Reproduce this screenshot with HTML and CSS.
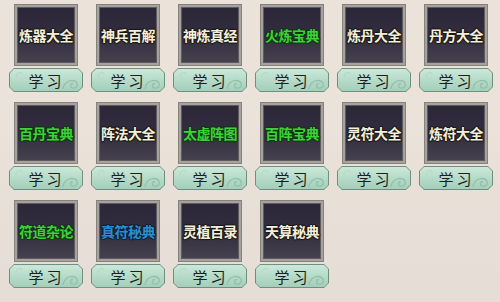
FILE: index.html
```html
<!DOCTYPE html>
<html lang="zh">
<head>
<meta charset="utf-8">
<link rel="stylesheet" href="styles.css">
</head>
<body>
<div class="grid">
  <div class="item"><div class="card"><span class="title white">炼器大全</span></div><div class="btn"><div class="btn-in"><svg class="swirl" viewBox="0 0 12 10"><path d="M1 9 Q1 2 7 2 Q10 2 10 5" fill="none"/></svg><span>学习</span><svg class="cloud" viewBox="0 0 20 16"><path d="M1 15 Q3 6 11 5 Q18 5 18 10 Q18 14 13 14 Q10 14 10 11 Q10 8 13 9" fill="none"/></svg></div></div></div>
  <div class="item"><div class="card"><span class="title white">神兵百解</span></div><div class="btn"><div class="btn-in"><svg class="swirl" viewBox="0 0 12 10"><path d="M1 9 Q1 2 7 2 Q10 2 10 5" fill="none"/></svg><span>学习</span><svg class="cloud" viewBox="0 0 20 16"><path d="M1 15 Q3 6 11 5 Q18 5 18 10 Q18 14 13 14 Q10 14 10 11 Q10 8 13 9" fill="none"/></svg></div></div></div>
  <div class="item"><div class="card"><span class="title white">神炼真经</span></div><div class="btn"><div class="btn-in"><svg class="swirl" viewBox="0 0 12 10"><path d="M1 9 Q1 2 7 2 Q10 2 10 5" fill="none"/></svg><span>学习</span><svg class="cloud" viewBox="0 0 20 16"><path d="M1 15 Q3 6 11 5 Q18 5 18 10 Q18 14 13 14 Q10 14 10 11 Q10 8 13 9" fill="none"/></svg></div></div></div>
  <div class="item"><div class="card"><span class="title green">火炼宝典</span></div><div class="btn"><div class="btn-in"><svg class="swirl" viewBox="0 0 12 10"><path d="M1 9 Q1 2 7 2 Q10 2 10 5" fill="none"/></svg><span>学习</span><svg class="cloud" viewBox="0 0 20 16"><path d="M1 15 Q3 6 11 5 Q18 5 18 10 Q18 14 13 14 Q10 14 10 11 Q10 8 13 9" fill="none"/></svg></div></div></div>
  <div class="item"><div class="card"><span class="title white">炼丹大全</span></div><div class="btn"><div class="btn-in"><svg class="swirl" viewBox="0 0 12 10"><path d="M1 9 Q1 2 7 2 Q10 2 10 5" fill="none"/></svg><span>学习</span><svg class="cloud" viewBox="0 0 20 16"><path d="M1 15 Q3 6 11 5 Q18 5 18 10 Q18 14 13 14 Q10 14 10 11 Q10 8 13 9" fill="none"/></svg></div></div></div>
  <div class="item"><div class="card"><span class="title white">丹方大全</span></div><div class="btn"><div class="btn-in"><svg class="swirl" viewBox="0 0 12 10"><path d="M1 9 Q1 2 7 2 Q10 2 10 5" fill="none"/></svg><span>学习</span><svg class="cloud" viewBox="0 0 20 16"><path d="M1 15 Q3 6 11 5 Q18 5 18 10 Q18 14 13 14 Q10 14 10 11 Q10 8 13 9" fill="none"/></svg></div></div></div>

  <div class="item"><div class="card"><span class="title green">百丹宝典</span></div><div class="btn"><div class="btn-in"><svg class="swirl" viewBox="0 0 12 10"><path d="M1 9 Q1 2 7 2 Q10 2 10 5" fill="none"/></svg><span>学习</span><svg class="cloud" viewBox="0 0 20 16"><path d="M1 15 Q3 6 11 5 Q18 5 18 10 Q18 14 13 14 Q10 14 10 11 Q10 8 13 9" fill="none"/></svg></div></div></div>
  <div class="item"><div class="card"><span class="title white">阵法大全</span></div><div class="btn"><div class="btn-in"><svg class="swirl" viewBox="0 0 12 10"><path d="M1 9 Q1 2 7 2 Q10 2 10 5" fill="none"/></svg><span>学习</span><svg class="cloud" viewBox="0 0 20 16"><path d="M1 15 Q3 6 11 5 Q18 5 18 10 Q18 14 13 14 Q10 14 10 11 Q10 8 13 9" fill="none"/></svg></div></div></div>
  <div class="item"><div class="card"><span class="title green">太虚阵图</span></div><div class="btn"><div class="btn-in"><svg class="swirl" viewBox="0 0 12 10"><path d="M1 9 Q1 2 7 2 Q10 2 10 5" fill="none"/></svg><span>学习</span><svg class="cloud" viewBox="0 0 20 16"><path d="M1 15 Q3 6 11 5 Q18 5 18 10 Q18 14 13 14 Q10 14 10 11 Q10 8 13 9" fill="none"/></svg></div></div></div>
  <div class="item"><div class="card"><span class="title green">百阵宝典</span></div><div class="btn"><div class="btn-in"><svg class="swirl" viewBox="0 0 12 10"><path d="M1 9 Q1 2 7 2 Q10 2 10 5" fill="none"/></svg><span>学习</span><svg class="cloud" viewBox="0 0 20 16"><path d="M1 15 Q3 6 11 5 Q18 5 18 10 Q18 14 13 14 Q10 14 10 11 Q10 8 13 9" fill="none"/></svg></div></div></div>
  <div class="item"><div class="card"><span class="title white">灵符大全</span></div><div class="btn"><div class="btn-in"><svg class="swirl" viewBox="0 0 12 10"><path d="M1 9 Q1 2 7 2 Q10 2 10 5" fill="none"/></svg><span>学习</span><svg class="cloud" viewBox="0 0 20 16"><path d="M1 15 Q3 6 11 5 Q18 5 18 10 Q18 14 13 14 Q10 14 10 11 Q10 8 13 9" fill="none"/></svg></div></div></div>
  <div class="item"><div class="card"><span class="title white">炼符大全</span></div><div class="btn"><div class="btn-in"><svg class="swirl" viewBox="0 0 12 10"><path d="M1 9 Q1 2 7 2 Q10 2 10 5" fill="none"/></svg><span>学习</span><svg class="cloud" viewBox="0 0 20 16"><path d="M1 15 Q3 6 11 5 Q18 5 18 10 Q18 14 13 14 Q10 14 10 11 Q10 8 13 9" fill="none"/></svg></div></div></div>

  <div class="item"><div class="card"><span class="title green">符道杂论</span></div><div class="btn"><div class="btn-in"><svg class="swirl" viewBox="0 0 12 10"><path d="M1 9 Q1 2 7 2 Q10 2 10 5" fill="none"/></svg><span>学习</span><svg class="cloud" viewBox="0 0 20 16"><path d="M1 15 Q3 6 11 5 Q18 5 18 10 Q18 14 13 14 Q10 14 10 11 Q10 8 13 9" fill="none"/></svg></div></div></div>
  <div class="item"><div class="card"><span class="title blue">真符秘典</span></div><div class="btn"><div class="btn-in"><svg class="swirl" viewBox="0 0 12 10"><path d="M1 9 Q1 2 7 2 Q10 2 10 5" fill="none"/></svg><span>学习</span><svg class="cloud" viewBox="0 0 20 16"><path d="M1 15 Q3 6 11 5 Q18 5 18 10 Q18 14 13 14 Q10 14 10 11 Q10 8 13 9" fill="none"/></svg></div></div></div>
  <div class="item"><div class="card"><span class="title white">灵植百录</span></div><div class="btn"><div class="btn-in"><svg class="swirl" viewBox="0 0 12 10"><path d="M1 9 Q1 2 7 2 Q10 2 10 5" fill="none"/></svg><span>学习</span><svg class="cloud" viewBox="0 0 20 16"><path d="M1 15 Q3 6 11 5 Q18 5 18 10 Q18 14 13 14 Q10 14 10 11 Q10 8 13 9" fill="none"/></svg></div></div></div>
  <div class="item"><div class="card"><span class="title white">天算秘典</span></div><div class="btn"><div class="btn-in"><svg class="swirl" viewBox="0 0 12 10"><path d="M1 9 Q1 2 7 2 Q10 2 10 5" fill="none"/></svg><span>学习</span><svg class="cloud" viewBox="0 0 20 16"><path d="M1 15 Q3 6 11 5 Q18 5 18 10 Q18 14 13 14 Q10 14 10 11 Q10 8 13 9" fill="none"/></svg></div></div></div>
</div>
</body>
</html>
```

FILE: styles.css
```css
html, body {
  margin: 0;
  padding: 0;
}
body {
  width: 500px;
  height: 302px;
  overflow: hidden;
  background: linear-gradient(180deg, #ebe2da 0%, #ebe2d9 40%, #e8dfd7 60%, #e6ded6 100%);
  font-family: "Noto Sans CJK SC", "Noto Sans", sans-serif;
}
.grid {
  display: grid;
  grid-template-columns: repeat(6, 74px);
  column-gap: 8px;
  row-gap: 10px;
  padding: 4px 0 0 9px;
}
.item {
  display: flex;
  flex-direction: column;
  align-items: center;
  gap: 2px;
}
.card {
  width: 64px;
  height: 62px;
  box-sizing: border-box;
  border: 1px solid #85817c;
  box-shadow: inset 0 0 0 2px #a6a29d, inset 0 0 0 3px #5e5a60;
  background: linear-gradient(180deg, #2b2737 0%, #322d3f 50%, #48434f 100%);
  display: flex;
  align-items: center;
  justify-content: center;
}
.title {
  font-size: 14px;
  font-weight: 700;
  letter-spacing: -0.5px;
  line-height: 1;
}
.white {
  color: #f3efdc;
  text-shadow: 0 0 1px #1a1812, 1px 0 1px #1a1812, -1px 0 1px #1a1812, 0 1px 1px #1a1812, 0 -1px 1px #1a1812;
}
.green {
  color: #3fd03c;
  text-shadow: 0 0 1px #0f3a0e, 1px 0 1px #0f3a0e, -1px 0 1px #0f3a0e, 0 1px 1px #0f3a0e, 0 -1px 1px #0f3a0e;
}
.blue {
  color: #2a8fd0;
  text-shadow: 0 0 1px #0c2032, 1px 0 1px #0c2032, -1px 0 1px #0c2032, 0 1px 1px #0c2032, 0 -1px 1px #0c2032;
}
.btn {
  width: 74px;
  height: 24px;
  background: #70907f;
  clip-path: polygon(5px 0, 69px 0, 74px 5px, 74px 19px, 69px 24px, 5px 24px, 0 19px, 0 5px);
  padding: 1px;
  box-sizing: border-box;
}
.btn-in {
  position: relative;
  width: 100%;
  height: 100%;
  background: linear-gradient(180deg, #cbe8da 0%, #b6dbc9 50%, #a3cfba 100%);
  clip-path: polygon(4px 0, 68px 0, 72px 4px, 72px 18px, 68px 22px, 4px 22px, 0 18px, 0 4px);
  display: flex;
  align-items: center;
  justify-content: center;
}
.btn-in span {
  position: relative;
  font-size: 15px;
  color: #1c1f1d;
  letter-spacing: 3px;
  line-height: 1;
  margin-left: 1px;
}
.swirl {
  position: absolute;
  left: 5px;
  top: 2px;
  width: 9px;
  height: 7px;
  stroke: #b3d5c4;
  stroke-width: 1.2;
}
.cloud {
  position: absolute;
  right: 3px;
  bottom: 1px;
  width: 17px;
  height: 14px;
  stroke: #95c0ab;
  stroke-width: 1.6;
}
```
